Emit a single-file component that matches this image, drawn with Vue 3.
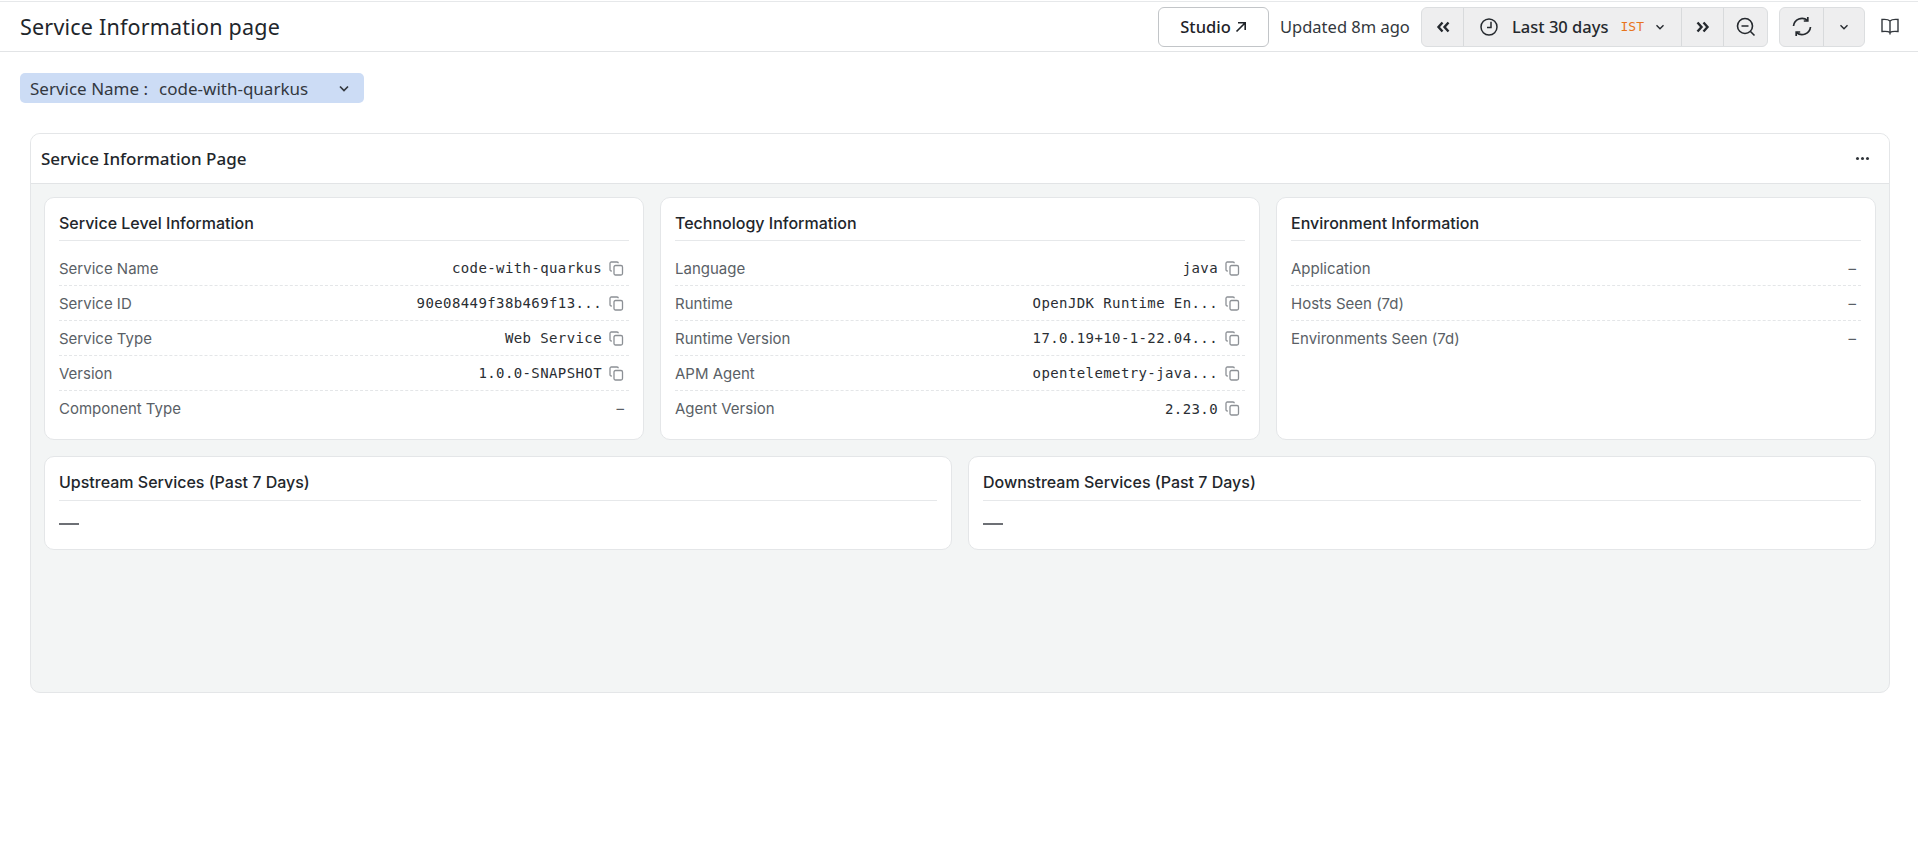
<script setup>
const cards = [
  {
    title: 'Service Level Information',
    rows: [
      { label: 'Service Name', value: 'code-with-quarkus' },
      { label: 'Service ID', value: '90e08449f38b469f13...' },
      { label: 'Service Type', value: 'Web Service' },
      { label: 'Version', value: '1.0.0-SNAPSHOT' },
      { label: 'Component Type', value: '' },
    ],
  },
  {
    title: 'Technology Information',
    rows: [
      { label: 'Language', value: 'java' },
      { label: 'Runtime', value: 'OpenJDK Runtime En...' },
      { label: 'Runtime Version', value: '17.0.19+10-1-22.04...' },
      { label: 'APM Agent', value: 'opentelemetry-java...' },
      { label: 'Agent Version', value: '2.23.0' },
    ],
  },
  {
    title: 'Environment Information',
    rows: [
      { label: 'Application', value: '' },
      { label: 'Hosts Seen (7d)', value: '' },
      { label: 'Environments Seen (7d)', value: '' },
    ],
  },
]
const services = ['Upstream Services (Past 7 Days)', 'Downstream Services (Past 7 Days)']
</script>

<template>
  <div class="page">
    <header class="topbar">
      <h1 class="page-title">Service Information page</h1>
      <div class="actions">
        <button class="studio">
          Studio
          <svg width="12" height="12" viewBox="0 0 12 12" fill="none" stroke="currentColor" stroke-width="1.6"><path d="M1.5 10.5 10 2M3 1.800h7.200V9" /></svg>
        </button>
        <span class="updated">Updated 8m ago</span>
        <div class="btn-group">
          <div class="seg arrow">
            <svg width="14" height="12" viewBox="0 0 14 12" fill="none" stroke="currentColor" stroke-width="2.4"><path d="M6.500 1.500 2.500 6l4 4.500M12.500 1.500 8.500 6l4 4.500" /></svg>
          </div>
          <div class="seg range">
            <svg width="18" height="18" viewBox="0 0 18 18" fill="none" stroke="currentColor" stroke-width="1.5"><circle cx="9" cy="9" r="8" /><path d="M11 3.800V9.500H7" /></svg>
            <span class="range-text">Last 30 days</span>
            <span class="tz">IST</span>
            <svg class="chev" width="10" height="10" viewBox="0 0 10 10" fill="none" stroke="currentColor" stroke-width="1.4"><path d="M1.500 3.200 5 6.700l3.500-3.500" /></svg>
          </div>
          <div class="seg arrow wide">
            <svg width="14" height="12" viewBox="0 0 14 12" fill="none" stroke="currentColor" stroke-width="2.4"><path d="M1.500 1.500 5.500 6l-4 4.500M7.500 1.500 11.500 6l-4 4.500" /></svg>
          </div>
          <div class="seg zoom">
            <svg width="20" height="20" viewBox="0 0 20 20" fill="none" stroke="currentColor" stroke-width="1.6"><circle cx="9" cy="9" r="7.500" /><path d="M5.500 9h7M14.500 14.500l4 4" /></svg>
          </div>
        </div>
        <div class="btn-group second">
          <div class="seg refresh">
            <svg width="20" height="21" viewBox="0 0 20 21" fill="none" stroke="currentColor" stroke-width="1.7"><path d="M1.500 10A8.500 8.500 0 0 1 15.500 4.500M18.500 11A8.500 8.500 0 0 1 4.500 16.500" /><path d="M15.800 1V5H11.800M4.200 20V16H8.200" /></svg>
          </div>
          <div class="seg caret">
            <svg width="10" height="10" viewBox="0 0 10 10" fill="none" stroke="currentColor" stroke-width="1.4"><path d="M1.500 3.200 5 6.700l3.500-3.500" /></svg>
          </div>
        </div>
        <svg class="book" width="18" height="17" viewBox="0 0 18 17" fill="none" stroke="currentColor" stroke-width="1.4"><path d="M9 3C7.500 1.500 4 1.200 1 1.500V13.500C4 13.200 7.500 13.300 9 14.500 10.500 13.300 14 13.200 17 13.500V1.500C14 1.200 10.500 1.500 9 3ZM9 3V16.500" /></svg>
      </div>
    </header>

    <div class="filters">
      <div class="filter">
        <span class="filter-label">Service Name :</span>
        <span class="filter-value">code-with-quarkus</span>
        <svg width="12" height="12" viewBox="0 0 12 12" fill="none" stroke="currentColor" stroke-width="1.7"><path d="M2 4.500 6 8.500l4-4" /></svg>
      </div>
    </div>

    <section class="panel">
      <div class="panel-head">
        <span class="panel-title">Service Information Page</span>
        <span class="dots"><i></i><i></i><i></i></span>
      </div>
      <div class="panel-body">
        <div class="info-grid">
          <div v-for="card in cards" :key="card.title" class="card">
            <div class="card-title">{{ card.title }}</div>
            <div class="rows">
              <div v-for="row in card.rows" :key="row.label" class="row">
                <span class="row-label">{{ row.label }}</span>
                <span v-if="row.value" class="row-value">
                  <span class="mono">{{ row.value }}</span>
                  <svg class="copy" width="15" height="15" viewBox="0 0 15 15" fill="none" stroke="currentColor" stroke-width="1.300"><rect x="5" y="4.500" width="8.500" height="9.500" rx="1.500" /><path d="M2.800 10H2.300A1.300 1.300 0 0 1 1 8.700V2.300A1.300 1.300 0 0 1 2.300 1H8A1.300 1.300 0 0 1 9.300 2.300" /></svg>
                </span>
                <span v-else class="row-empty">–</span>
              </div>
            </div>
          </div>
        </div>
        <div class="service-grid">
          <div v-for="title in services" :key="title" class="card service">
            <div class="card-title">{{ title }}</div>
            <div class="service-empty"></div>
          </div>
        </div>
      </div>
    </section>
  </div>
</template>

<style scoped>
.page {
  width: 1918px;
  height: 862px;
  background: #fff;
  font-family: Inter, "Noto Sans", sans-serif;
  color: #1f2328;
  overflow: hidden;
}

.topbar {
  height: 51px;
  margin-top: 1px;
  border-top: 1px solid #e6e8ea;
  border-bottom: 1px solid #e2e4e6;
  box-sizing: border-box;
  display: flex;
  align-items: center;
  justify-content: space-between;
  padding: 0 19px 0 20px;
}

.page-title {
  margin: 0;
  font-family: "Noto Sans", sans-serif;
  font-size: 21.5px;
  font-weight: 400;
  color: #22262b;
  letter-spacing: 0.2px;
}

.actions {
  display: flex;
  align-items: center;
}

.studio {
  width: 111px;
  height: 40px;
  box-sizing: border-box;
  background: #fff;
  border: 1px solid #c2c5c8;
  border-radius: 6px;
  font-family: "Noto Sans", sans-serif;
  font-size: 16.5px;
  font-weight: 500;
  color: #1f2328;
  display: flex;
  align-items: center;
  justify-content: center;
  gap: 4px;
}

.updated {
  width: 131px;
  margin-left: 11px;
  margin-right: 10px;
  font-family: "Noto Sans", sans-serif;
  font-size: 16.5px;
  color: #33383d;
  white-space: nowrap;
}

.btn-group {
  height: 40px;
  box-sizing: border-box;
  display: flex;
  background: #eeeeef;
  border: 1px solid #dcdee0;
  border-radius: 6px;
  margin-right: 11px;
}

.btn-group.second {
  margin-right: 16px;
}

.seg {
  display: flex;
  align-items: center;
  justify-content: center;
  border-left: 1px solid #d8dadc;
  color: #25292e;
  box-sizing: border-box;
}

.seg:first-child {
  border-left: 0;
}

.arrow {
  width: 41px;
}

.arrow.wide {
  width: 42px;
}

.zoom {
  width: 44px;
}

.range {
  width: 218px;
  font-family: "Noto Sans", sans-serif;
  font-size: 16.5px;
  font-weight: 500;
}

.range-text {
  margin-left: 14px;
  white-space: nowrap;
}

.tz {
  margin-left: 12px;
  font-family: "DejaVu Sans Mono", monospace;
  font-size: 13px;
  font-weight: 400;
  color: #e8741c;
}

.chev {
  margin-left: 11px;
}

.refresh {
  width: 43px;
}

.caret {
  width: 41px;
}

.book {
  color: #33383d;
}

.filters {
  padding: 21px 20px 0;
}

.filter {
  width: 344px;
  height: 30px;
  box-sizing: border-box;
  padding: 0 14px 0 10px;
  background: #ccdcf5;
  border-radius: 5px;
  display: flex;
  align-items: center;
  font-family: "Noto Sans", sans-serif;
  font-size: 17px;
  color: #33383f;
}

.filter-value {
  margin-left: 11px;
  flex: 1;
}

.panel {
  margin: 30px 28px 0 30px;
  height: 560px;
  box-sizing: border-box;
  border: 1px solid #e4e6e8;
  border-radius: 10px;
  overflow: hidden;
  display: flex;
  flex-direction: column;
  background: #f3f5f5;
}

.panel-head {
  height: 50px;
  flex: none;
  box-sizing: border-box;
  background: #fff;
  border-bottom: 1px solid #e2e4e6;
  display: flex;
  align-items: center;
  justify-content: space-between;
  padding: 0 20px 0 10px;
}

.panel-title {
  font-family: "Noto Sans", sans-serif;
  font-size: 17px;
  font-weight: 500;
  color: #22262b;
}

.dots {
  display: flex;
  gap: 2px;
}

.dots i {
  width: 3px;
  height: 3px;
  border-radius: 50%;
  background: #30343a;
}

.panel-body {
  padding: 13px 13px 0;
  display: flex;
  flex-direction: column;
  gap: 16px;
}

.info-grid {
  display: grid;
  grid-template-columns: repeat(3, 1fr);
  gap: 16px;
}

.service-grid {
  display: grid;
  grid-template-columns: repeat(2, 1fr);
  gap: 16px;
}

.card {
  background: #fff;
  border: 1px solid #e4e6e8;
  border-radius: 10px;
  padding: 0 14px;
  box-sizing: border-box;
  height: 243px;
}

.service {
  height: 94px;
}

.service .card-title {
  height: 44px;
}

.card-title {
  height: 43px;
  box-sizing: border-box;
  padding-top: 16px;
  font-size: 16px;
  font-weight: 500;
  line-height: 18px;
  color: #22262b;
  border-bottom: 1px solid #e6e8ea;
}

.rows {
  padding-top: 10px;
}

.row {
  height: 35px;
  box-sizing: border-box;
  display: flex;
  align-items: center;
  justify-content: space-between;
  padding-right: 5px;
  border-bottom: 1px dashed #e4e6e8;
  font-size: 15px;
}

.row:last-child {
  border-bottom: 0;
}

.row-label {
  color: #5a5f66;
}

.row-value {
  display: flex;
  align-items: center;
  gap: 7px;
}

.mono {
  font-family: "DejaVu Sans Mono", monospace;
  font-size: 14px;
  letter-spacing: 0.4px;
  color: #2a2e33;
}

.copy {
  color: #8c9095;
}

.row-empty {
  color: #5a5f66;
}

.service-empty {
  width: 20px;
  height: 2px;
  margin-top: 22px;
  background: #6d7075;
}
</style>

<style>
html,
body {
  margin: 0;
  background: #fff;
}
</style>
